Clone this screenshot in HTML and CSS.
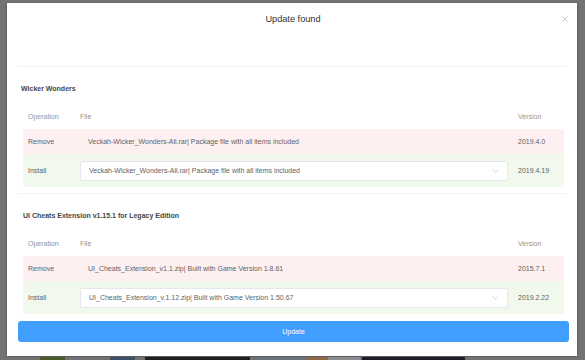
FILE: index.html
```html
<!doctype html>
<html lang="en">
  <head>
    <meta charset="UTF-8" />
    <meta name="viewport" content="width=device-width, initial-scale=1.0" />
    <title>Update found</title>
    <link rel="stylesheet" href="styles.css">
  </head>
  <body>
    <div class="dialog">
      <div class="dialog-header">
        <span></span>
        <span class="dialog-title">Update found</span>
        <button class="dialog-close" aria-label="Close">
          <svg width="6" height="6" viewBox="0 0 6 6">
            <path d="M0.5 0.5L5.5 5.5M5.5 0.5L0.5 5.5" stroke="#b4b7bd" stroke-width="0.8" fill="none" />
          </svg>
        </button>
      </div>

      <div class="section">
        <div class="section-title">Wicker Wonders</div>
        <div class="table">
          <div class="row head">
            <div class="cell">Operation</div>
            <div class="cell">File</div>
            <div class="cell">Version</div>
          </div>
          <div class="row remove">
            <div class="cell">Remove</div>
            <div class="cell file-text">Veckah-Wicker_Wonders-All.rar| Package file with all items included</div>
            <div class="cell">2019.4.0</div>
          </div>
          <div class="row install">
            <div class="cell">Install</div>
            <div class="cell">
              <div class="select">
                <span>Veckah-Wicker_Wonders-All.rar| Package file with all items included</span>
                <svg width="7" height="4" viewBox="0 0 7 4">
                  <path d="M0.5 0.5L3.5 3.3L6.5 0.5" stroke="#c0c4cc" stroke-width="0.7" fill="none" />
                </svg>
              </div>
            </div>
            <div class="cell">2019.4.19</div>
          </div>
        </div>
      </div>

      <div class="section last">
        <div class="section-title">UI Cheats Extension v1.15.1 for Legacy Edition</div>
        <div class="table">
          <div class="row head">
            <div class="cell">Operation</div>
            <div class="cell">File</div>
            <div class="cell">Version</div>
          </div>
          <div class="row remove">
            <div class="cell">Remove</div>
            <div class="cell file-text">UI_Cheats_Extension_v1.1.zip| Built with Game Version 1.8.61</div>
            <div class="cell">2015.7.1</div>
          </div>
          <div class="row install">
            <div class="cell">Install</div>
            <div class="cell">
              <div class="select">
                <span>UI_Cheats_Extension_v.1.12.zip| Built with Game Version 1.50.67</span>
                <svg width="7" height="4" viewBox="0 0 7 4">
                  <path d="M0.5 0.5L3.5 3.3L6.5 0.5" stroke="#c0c4cc" stroke-width="0.7" fill="none" />
                </svg>
              </div>
            </div>
            <div class="cell">2019.2.22</div>
          </div>
        </div>
      </div>

      <div class="dialog-footer">
        <button class="update-btn">Update</button>
      </div>
    </div>

    <div class="thumbs"></div>
  </body>
</html>
```

FILE: styles.css
```css
html,
body {
  margin: 0;
  height: 100%;
  overflow: hidden;
}
body {
  background-color: #727272;
  font-family: "Liberation Sans", Arial, sans-serif;
  color: #606266;
}
.dialog {
  box-sizing: border-box;
  width: 570px;
  height: 353px;
  margin: 3px 0 0 7px;
  background-color: #fff;
  box-shadow: 0 1px 3px rgba(0, 0, 0, 0.3);
}
.dialog-header {
  display: grid;
  grid-template-columns: 1fr auto 1fr;
  align-items: center;
  align-content: start;
  height: 63px;
  padding: 10px 8px 0 10px;
  box-sizing: border-box;
}
.dialog-title {
  font-size: 9.2px;
  line-height: 12px;
  color: #303133;
}
.dialog-close {
  justify-self: end;
  width: 8px;
  height: 8px;
  padding: 0;
  border: none;
  background: none;
  display: flex;
  align-items: center;
  justify-content: center;
}
.section {
  margin: 0 10px;
  padding: 16px 0 6px;
  border-top: 1px solid #f0f1f4;
}
.section-title {
  font-size: 7px;
  line-height: 12px;
  font-weight: bold;
  color: #454649;
  padding-left: 4px;
  margin-bottom: 9px;
}
.section.last .section-title {
  padding-left: 6px;
}
.table {
  margin: 0 3px 0 6px;
  font-size: 7px;
}
.row {
  display: grid;
  grid-template-columns: 52px 1fr 51px;
  align-items: center;
  height: 25px;
}
.row .cell {
  padding: 0 5px;
  white-space: nowrap;
}
.row.head {
  color: #909399;
}
.row.remove {
  background-color: #fef0f0;
}
.row.install {
  background-color: #f0f9eb;
  height: 33px;
}
.cell.file-text {
  padding-left: 13px;
}
.select {
  display: flex;
  align-items: center;
  justify-content: space-between;
  height: 20px;
  box-sizing: border-box;
  padding: 0 8px;
  background-color: #fff;
  border: 1px solid #e4e7ed;
  border-radius: 2px;
}
.dialog-footer {
  padding: 1px 8px 0 11px;
}
.update-btn {
  display: block;
  width: 100%;
  height: 21px;
  border: none;
  border-radius: 3px;
  background-color: #409eff;
  color: #fff;
  font-family: "Liberation Sans", Arial, sans-serif;
  font-size: 7px;
}
/* page content peeking out under the overlay */
.thumbs {
  height: 4px;
  margin-top: 1px;
  background: linear-gradient(90deg,
    #727272 0 40px,
    #4a5a2c 40px 65px,
    #727272 65px 110px,
    #3a5068 110px 135px,
    #727272 135px 145px,
    #1e201c 145px 250px,
    #6b7478 250px 305px,
    #8a6a4a 305px 328px,
    #8a8e90 328px 360px,
    #727272 360px 362px,
    #1c1d26 362px 465px,
    #727272 465px);
}
```
